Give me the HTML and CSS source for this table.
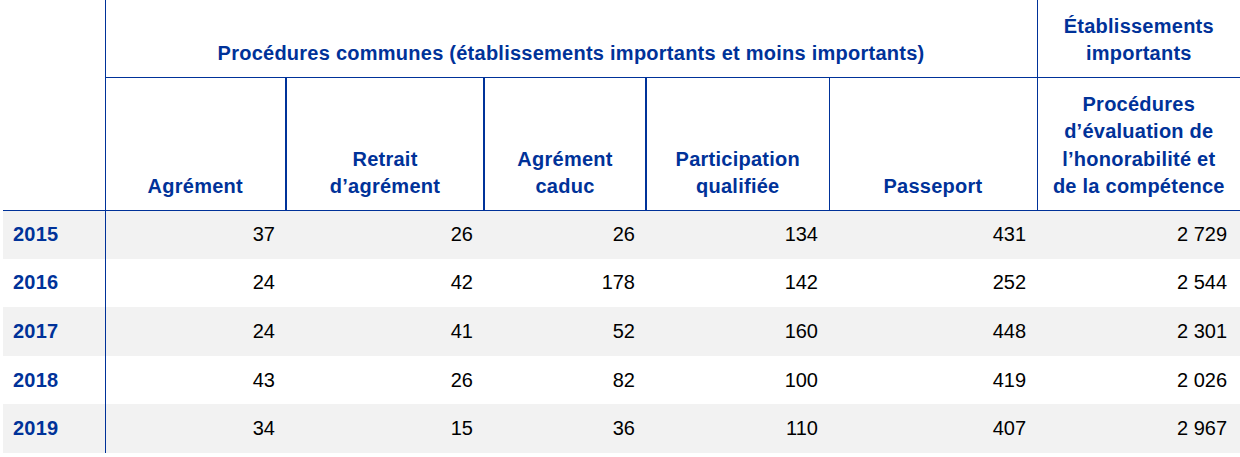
FILE: index.html
```html
<!DOCTYPE html>
<html lang="fr">
<head>
    <meta charset="UTF-8">
    <title>Procédures d'autorisation</title>
    <link rel="stylesheet" href="styles.css">
</head>
<body>

<table class="stats">
    <colgroup>
        <col class="c-year">
        <col class="c1">
        <col class="c2">
        <col class="c3">
        <col class="c4">
        <col class="c5">
        <col class="c6">
    </colgroup>
    <thead>
        <tr class="head-top">
            <th class="corner" rowspan="2"></th>
            <th class="group" colspan="5">Procédures communes (établissements importants et moins importants)</th>
            <th class="group">Établissements<br>importants</th>
        </tr>
        <tr class="head-sub">
            <th class="thick">Agrément</th>
            <th class="thick">Retrait<br>d’agrément</th>
            <th class="thick">Agrément<br>caduc</th>
            <th>Participation<br>qualifiée</th>
            <th>Passeport</th>
            <th>Procédures<br>d’évaluation de<br>l’honorabilité et<br>de la compétence</th>
        </tr>
    </thead>
    <tbody>
        <tr>
            <th>2015</th>
            <td>37</td><td>26</td><td>26</td><td>134</td><td>431</td><td>2 729</td>
        </tr>
        <tr>
            <th>2016</th>
            <td>24</td><td>42</td><td>178</td><td>142</td><td>252</td><td>2 544</td>
        </tr>
        <tr>
            <th>2017</th>
            <td>24</td><td>41</td><td>52</td><td>160</td><td>448</td><td>2 301</td>
        </tr>
        <tr>
            <th>2018</th>
            <td>43</td><td>26</td><td>82</td><td>100</td><td>419</td><td>2 026</td>
        </tr>
        <tr>
            <th>2019</th>
            <td>34</td><td>15</td><td>36</td><td>110</td><td>407</td><td>2 967</td>
        </tr>
    </tbody>
</table>

</body>
</html>
```

FILE: styles.css
```css
body {
    margin: 0;
    padding: 0;
    background-color: #ffffff;
    font-family: "Liberation Sans", Arial, sans-serif;
}

.stats {
    margin-left: 3px;
    width: 1237px;
    table-layout: fixed;
    border-collapse: collapse;
    font-size: 20px;
    color: #000000;
}

.c-year { width: 102px; }
.c1 { width: 181px; }
.c2 { width: 198px; }
.c3 { width: 162px; }
.c4 { width: 183px; }
.c5 { width: 208px; }
.c6 { width: 203px; }

.stats thead th {
    color: #003299;
    font-weight: bold;
    text-align: center;
    vertical-align: bottom;
    line-height: 27.5px;
    letter-spacing: 0.25px;
    padding: 0 2px 9px 2px;
    border-right: 1px solid #003299;
}

.stats .corner {
    border-bottom: 1px solid #003299;
}

.head-top {
    height: 77px;
}

.head-top .group {
    border-bottom: 1px solid #003299;
}

.head-sub {
    height: 133px;
}

.head-sub th {
    border-bottom: 1px solid #003299;
}

.head-sub th.thick {
    border-right-width: 2px;
}

.stats thead tr th:last-child {
    border-right: none;
}

.stats tbody tr {
    height: 48.6px;
}

.stats tbody tr:nth-child(odd) {
    background-color: #f2f2f2;
}

.stats tbody th {
    color: #003299;
    font-weight: bold;
    text-align: left;
    letter-spacing: 0.25px;
    padding: 0 0 0 10px;
    border-right: 1px solid #003299;
}

.stats tbody td {
    text-align: right;
    padding: 0 11px 0 0;
}

.stats tbody td:last-child {
    padding-right: 13px;
}
```
